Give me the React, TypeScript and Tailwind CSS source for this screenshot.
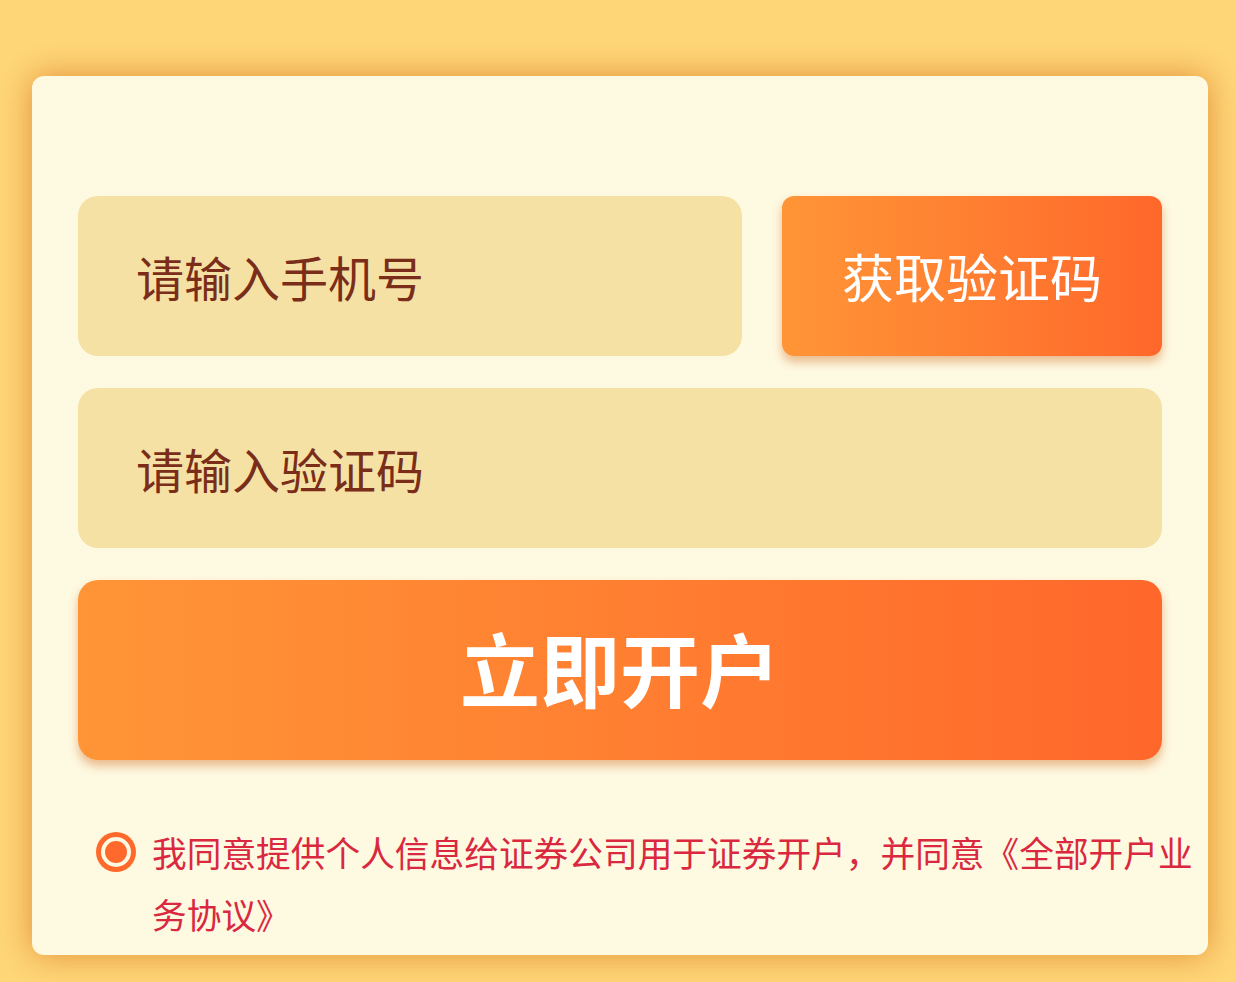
import React, { useState } from 'react';

const font = { fontFamily: '"Noto Sans CJK SC", "Noto Sans", sans-serif' };

const Radio: React.FC<{ checked: boolean; onToggle: () => void }> = ({ checked, onToggle }) => (
    <button
        onClick={onToggle}
        className="mt-[11px] flex h-[40px] w-[40px] shrink-0 items-center justify-center rounded-full bg-[#ff6a2c]"
    >
        <span className="flex h-[30px] w-[30px] items-center justify-center rounded-full bg-[#fef9e1]">
            {checked && <span className="h-[22px] w-[22px] rounded-full bg-[#ff6a2c]" />}
        </span>
    </button>
);

export default function App() {
    const [phone, setPhone] = useState('');
    const [code, setCode] = useState('');
    const [agreed, setAgreed] = useState(true);

    return (
        <div className="min-h-[982px] bg-[#fed678] pl-[32px] pr-[28px] pt-[76px]" style={font}>
            {/* Card */}
            <div className="h-[879px] rounded-[12px] bg-[#fef9e1] px-[46px] pt-[120px] shadow-[0_0_32px_rgba(222,130,42,0.85)]">
                {/* Phone + get code */}
                <div className="flex gap-[40px]">
                    <input
                        value={phone}
                        onChange={(e) => setPhone(e.target.value)}
                        placeholder="请输入手机号"
                        className="h-[160px] w-[664px] rounded-[20px] bg-[#f6e1a5] pl-[58px] text-[48px] text-[#7a2e1a] outline-none placeholder:text-[#7a2e1a]"
                    />
                    <button className="h-[160px] flex-1 rounded-[12px] bg-gradient-to-r from-[#ff9537] to-[#ff672b] text-[52px] text-white shadow-[0_6px_10px_rgba(210,110,40,0.45)]">
                        获取验证码
                    </button>
                </div>

                {/* Code */}
                <input
                    value={code}
                    onChange={(e) => setCode(e.target.value)}
                    placeholder="请输入验证码"
                    className="mt-[32px] block h-[160px] w-full rounded-[20px] bg-[#f6e1a5] pl-[58px] text-[48px] text-[#7a2e1a] outline-none placeholder:text-[#7a2e1a]"
                />

                {/* Submit */}
                <button className="mt-[32px] flex h-[180px] w-full items-center justify-center rounded-[20px] bg-gradient-to-r from-[#ff9537] to-[#ff672b] pb-[8px] text-[80px] font-bold text-white shadow-[0_6px_10px_rgba(210,110,40,0.45)]">
                    立即开户
                </button>

                {/* Agreement */}
                <div className="mt-[61px] flex gap-[16px] pl-[18px]">
                    <Radio checked={agreed} onToggle={() => setAgreed(!agreed)} />
                    <p className="w-[1046px] shrink-0 text-[34.7px] leading-[62px] text-[#d9283f]">
                        我同意提供个人信息给证券公司用于证券开户，并同意《全部开户业务协议》
                    </p>
                </div>
            </div>
        </div>
    );
}
